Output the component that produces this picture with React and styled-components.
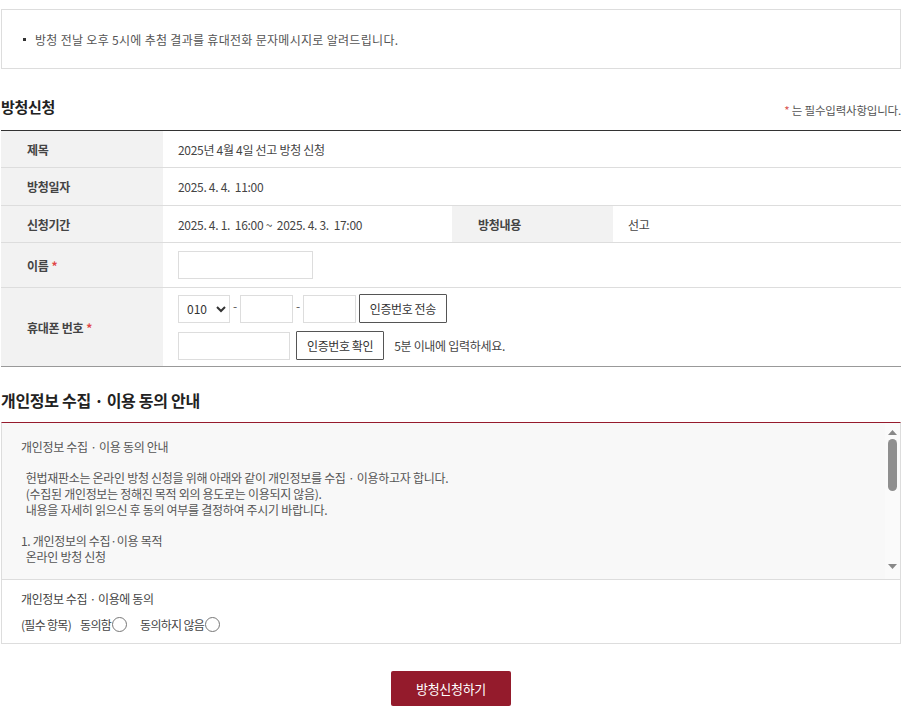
import React from "react";
import styled, { createGlobalStyle } from "styled-components";

const GlobalStyle = createGlobalStyle`
  html, body {
    margin: 0;
    padding: 0;
    background: #fff;
  }
  body {
    font-family: "Noto Sans CJK KR", "Noto Sans", sans-serif;
    font-size: 12px;
    color: #333;
  }
  * {
    box-sizing: border-box;
  }
`;

const Page = styled.div`
  width: 900px;
  margin-left: 1px;
  padding-top: 9px;
  padding-bottom: 14px;
`;

// 상단 안내 박스
const NoticeBox = styled.div`
  height: 60px;
  border: 1px solid #ddd;
  display: flex;
  align-items: center;
  padding-left: 21px;
  font-size: 12px;
  color: #555;
  letter-spacing: 0.3px;

  &::before {
    content: "";
    width: 3px;
    height: 3px;
    background: #333;
    margin-right: 9px;
  }
`;

const SectionHead = styled.div`
  display: flex;
  justify-content: space-between;
  align-items: flex-end;
  margin-top: ${(p) => p.$mt}px;
  padding-bottom: ${(p) => p.$pb}px;
`;

const Title = styled.h2`
  margin: 0;
  font-size: ${(p) => p.$size}px;
  font-weight: bold;
  color: #222;
  letter-spacing: -0.3px;
  line-height: 20px;
`;

const Note = styled.span`
  font-size: 11.5px;
  color: #555;
  letter-spacing: -0.2px;
  margin-bottom: -1px;

  & > em {
    font-style: normal;
    color: #d9534f;
  }
`;

// 신청 테이블
const Table = styled.table`
  width: 100%;
  border-collapse: collapse;
  table-layout: fixed;
  border-top: 1px solid #333;
  border-bottom: 1px solid #999;
`;

const Row = styled.tr`
  height: ${(p) => p.$h}px;
  border-bottom: 1px solid #ddd;
  &:last-child {
    border-bottom: none;
  }
`;

const Th = styled.th`
  background: #f2f2f2;
  text-align: left;
  padding-left: 26px;
  font-size: 12px;
  font-weight: bold;
  color: #444;
  letter-spacing: -0.3px;
`;

const Td = styled.td`
  padding-left: 15px;
  font-size: 12px;
  color: #444;
  letter-spacing: -0.3px;
`;

const Req = styled.span`
  color: #e04646;
  margin-left: 3px;
  font-weight: bold;
`;

const Field = styled.input`
  width: ${(p) => p.$w}px;
  height: 28px;
  border: 1px solid #ddd;
  padding: 0 6px;
  font-family: inherit;
  font-size: 12px;
  outline: none;
`;

const Select = styled.select`
  width: 52px;
  height: 28px;
  border: 1px solid #ddd;
  padding: 0 4px;
  font-family: inherit;
  font-size: 12px;
  color: #333;
  background: #fff;
`;

const Line = styled.div`
  display: flex;
  align-items: center;
  gap: ${(p) => p.$gap}px;
  & + & {
    margin-top: 8px;
  }
`;

const Dash = styled.span`
  color: #555;
  align-self: flex-start;
  margin-top: 3px;
`;

const SmallButton = styled.button`
  height: 29px;
  padding: 0 10px;
  border: 1px solid #555;
  border-radius: 1px;
  background: #fff;
  font-family: inherit;
  font-size: 12px;
  color: #333;
  letter-spacing: -0.4px;
`;

const Hint = styled.span`
  margin-left: 4px;
  font-size: 12px;
  color: #444;
  letter-spacing: -0.3px;
`;

// 개인정보 동의 영역
const PrivacyBox = styled.div`
  display: flex;
  height: 158px;
  border: 1px solid #ddd;
  border-top: 1px solid #961b2d;
  background: #f8f8f8;
`;

const PrivacyText = styled.div`
  flex: 1;
  overflow: hidden;
  padding: 16px 19px;
  font-size: 12px;
  line-height: 15.7px;
  color: #555;
  white-space: pre-wrap;
  letter-spacing: -0.3px;
`;

const ScrollTrack = styled.div`
  width: 15px;
  display: flex;
  flex-direction: column;
  align-items: center;
  background: #fafafa;
  padding: 7px 0 10px;
`;

const ScrollThumb = styled.div`
  width: 9px;
  height: 52px;
  margin-top: 4px;
  border-radius: 5px;
  background: #8f8f8f;
`;

const ScrollSpacer = styled.div`
  flex: 1;
`;

const Arrow = ({ down }) => (
  <svg width="9" height="5" viewBox="0 0 9 5">
    <path d={down ? "M0 0H9L4.5 5Z" : "M0 5H9L4.5 0Z"} fill="#888" />
  </svg>
);

const AgreeBox = styled.div`
  border: 1px solid #ddd;
  border-top: none;
  padding: 10px 19px 10px;
  font-size: 12px;
  color: #444;
  letter-spacing: -0.4px;
`;

const AgreeRow = styled.div`
  display: flex;
  align-items: center;
  margin-top: 9px;
  letter-spacing: -0.7px;
`;

const RadioLabel = styled.label`
  display: inline-flex;
  align-items: center;
  gap: 1px;
  margin-left: ${(p) => p.$ml}px;
`;

const Radio = styled.input`
  appearance: none;
  width: 15px;
  height: 15px;
  margin: 0;
  border: 1px solid #777;
  border-radius: 50%;
  background: #fff;
`;

const Actions = styled.div`
  display: flex;
  justify-content: center;
  margin-top: 27px;
`;

const SubmitButton = styled.button`
  width: 120px;
  height: 35px;
  border: none;
  border-radius: 2px;
  background: #941b2c;
  color: #fff;
  font-family: inherit;
  font-size: 13px;
  letter-spacing: -0.3px;
`;

const privacyText = `개인정보 수집 · 이용 동의 안내

  헌법재판소는 온라인 방청 신청을 위해 아래와 같이 개인정보를 수집 · 이용하고자 합니다.
  (수집된 개인정보는 정해진 목적 외의 용도로는 이용되지 않음).
  내용을 자세히 읽으신 후 동의 여부를 결정하여 주시기 바랍니다.

1. 개인정보의 수집·이용 목적
  온라인 방청 신청

2. 수집하는 개인정보의 항목
  이름, 휴대폰 번호`;

const App = () => {
  return (
    <Page>
      <GlobalStyle />
      <NoticeBox>방청 전날 오후 5시에 추첨 결과를 휴대전화 문자메시지로 알려드립니다.</NoticeBox>

      <SectionHead $mt={28} $pb={13}>
        <Title $size={15}>방청신청</Title>
        <Note>
          <em>*</em> 는 필수입력사항입니다.
        </Note>
      </SectionHead>

      <Table>
        <colgroup>
          <col style={{ width: 162 }} />
          <col style={{ width: 289 }} />
          <col style={{ width: 161 }} />
          <col />
        </colgroup>
        <tbody>
          <Row $h={37}>
            <Th>제목</Th>
            <Td colSpan={3}>2025년 4월 4일 선고 방청 신청</Td>
          </Row>
          <Row $h={38}>
            <Th>방청일자</Th>
            <Td colSpan={3}>2025. 4. 4.&nbsp; 11:00</Td>
          </Row>
          <Row $h={37}>
            <Th>신청기간</Th>
            <Td>2025. 4. 1.&nbsp; 16:00 ~&nbsp; 2025. 4. 3.&nbsp; 17:00</Td>
            <Th>방청내용</Th>
            <Td>선고</Td>
          </Row>
          <Row $h={45}>
            <Th>
              이름<Req>*</Req>
            </Th>
            <Td colSpan={3}>
              <Field $w={135} type="text" />
            </Td>
          </Row>
          <Row $h={79}>
            <Th>
              휴대폰 번호<Req>*</Req>
            </Th>
            <Td colSpan={3}>
              <Line $gap={3}>
                <Select defaultValue="010">
                  <option>010</option>
                  <option>011</option>
                  <option>016</option>
                  <option>017</option>
                  <option>019</option>
                </Select>
                <Dash>-</Dash>
                <Field $w={53} type="text" />
                <Dash>-</Dash>
                <Field $w={53} type="text" />
                <SmallButton>인증번호 전송</SmallButton>
              </Line>
              <Line $gap={6}>
                <Field $w={112} type="text" />
                <SmallButton>인증번호 확인</SmallButton>
                <Hint>5분 이내에 입력하세요.</Hint>
              </Line>
            </Td>
          </Row>
        </tbody>
      </Table>

      <SectionHead $mt={23} $pb={12}>
        <Title $size={16}>개인정보 수집 · 이용 동의 안내</Title>
      </SectionHead>
      <PrivacyBox>
        <PrivacyText>{privacyText}</PrivacyText>
        <ScrollTrack>
          <Arrow />
          <ScrollThumb />
          <ScrollSpacer />
          <Arrow down />
        </ScrollTrack>
      </PrivacyBox>
      <AgreeBox>
        <div>개인정보 수집 · 이용에 동의</div>
        <AgreeRow>
          (필수 항목)
          <RadioLabel $ml={9}>
            동의함 <Radio type="radio" name="agree" />
          </RadioLabel>
          <RadioLabel $ml={13}>
            동의하지 않음 <Radio type="radio" name="agree" />
          </RadioLabel>
        </AgreeRow>
      </AgreeBox>

      <Actions>
        <SubmitButton>방청신청하기</SubmitButton>
      </Actions>
    </Page>
  );
};

export default App;
